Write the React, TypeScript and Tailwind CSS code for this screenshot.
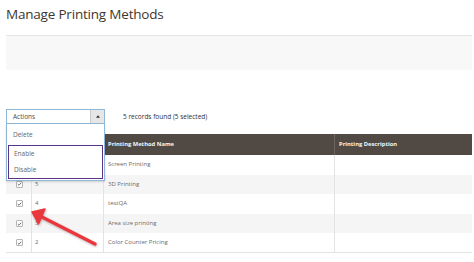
import React from 'react';

type Row = { id: string; name: string; checked: boolean };

const rows: Row[] = [
    { id: '6', name: 'Screen Printing', checked: true },
    { id: '5', name: '3D Printing', checked: true },
    { id: '4', name: 'testQA', checked: true },
    { id: '3', name: 'Area size printing', checked: true },
    { id: '2', name: 'Color Counter Pricing', checked: true },
];

const Check: React.FC = () => (
    <span className="flex items-center justify-center w-[7px] h-[7px] border border-[#b5b5b5] bg-white rounded-[1px]">
        <svg viewBox="0 0 8 8" className="w-[6px] h-[6px]">
            <path d="M1.2 4.2 L3.2 6 L6.8 1.8" fill="none" stroke="#444" strokeWidth="1.2" />
        </svg>
    </span>
);

const App: React.FC = () => {
    return (
        <div className="relative w-[474px] h-[262px] overflow-hidden bg-white px-[6px]" style={{ fontFamily: '"Open Sans", sans-serif' }}>
            <h1 className="pt-[4px] text-[13.5px] leading-[20px] text-[#41362f] tracking-[-0.2px]">Manage Printing Methods</h1>

            <div className="mt-[11px] h-[35px] bg-[#f8f8f8] border-t border-[#e5e5e5] mr-[-4px]"></div>

            <div className="relative mt-[39px] flex items-center h-[15px]">
                <div className="flex w-[99px] h-[15px] border border-[#8fb8d8] bg-white">
                    <span className="flex-1 pl-[6px] text-[6.5px] leading-[13px] text-[#514943]">Actions</span>
                    <span className="flex items-center justify-center w-[14px] bg-[#e6e6e6] border-l border-[#c9c9c9]">
                        <svg viewBox="0 0 6 4" className="w-[4px] h-[3px]">
                            <path d="M0 4 L3 0 L6 4 Z" fill="#333" />
                        </svg>
                    </span>
                </div>
                <span className="ml-[18px] text-[6.5px] text-[#303030]">5 records found (5 selected)</span>

                <div className="absolute left-0 top-[15px] z-10 w-[99px] bg-white border border-[#8fb8d8] border-t-0 shadow-[0_1px_2px_rgba(0,0,0,0.15)]">
                    <div className="h-[21px] pl-[6px] text-[6.5px] leading-[21px] text-[#666]">Delete</div>
                    <div className="mx-[1px] mb-[1px] border-[1.5px] border-[#5a3487]">
                        <div className="h-[16px] pl-[5px] text-[6.5px] leading-[16px] text-[#666]">Enable</div>
                        <div className="h-[16px] pl-[5px] text-[6.5px] leading-[16px] text-[#666]">Disable</div>
                    </div>
                </div>
            </div>

            <div className="mt-[10px] w-[466px]">
                <div className="flex h-[21px] bg-[#514943] text-[5.8px] font-bold text-[#f5f5f5] items-center">
                    <div className="w-[26px] h-full border-r border-[#6e6560]"></div>
                    <div className="w-[72px] h-full border-r border-[#6e6560]"></div>
                    <div className="w-[231px] h-full border-r border-[#6e6560] flex items-center pl-[4px]">Printing Method Name</div>
                    <div className="flex-1 h-full flex items-center pl-[4px]">Printing Description</div>
                </div>
                {rows.map((r, i) => (
                    <div key={r.id} className={`flex h-[19.6px] items-center text-[6px] text-[#6b6b6b] ${i % 2 === 1 ? 'bg-[#f5f5f5]' : 'bg-white'} ${i === rows.length - 1 ? 'border-b border-[#e3e3e3]' : ''}`}>
                        <div className="w-[26px] h-full flex items-center justify-center border-r border-[#e3e3e3] pl-[1px]">
                            {r.checked && <Check />}
                        </div>
                        <div className="w-[72px] h-full flex items-center pl-[3px] border-r border-[#e3e3e3]">{r.id}</div>
                        <div className="w-[231px] h-full flex items-center pl-[4px] border-r border-[#e3e3e3]">{r.name}</div>
                        <div className="flex-1 h-full"></div>
                    </div>
                ))}
            </div>

            <svg className="absolute left-0 top-0 pointer-events-none" width="474" height="262" viewBox="0 0 474 262">
                <defs>
                    <filter id="sh" x="-20%" y="-20%" width="140%" height="140%">
                        <feDropShadow dx="0.5" dy="1" stdDeviation="0.8" floodColor="#000" floodOpacity="0.3" />
                    </filter>
                </defs>
                <g filter="url(#sh)">
                    <line x1="95" y1="244" x2="40" y2="216" stroke="#e8383d" strokeWidth="3.5" strokeLinecap="round" />
                    <path d="M32 212 L45 209 L38.5 224 Z" fill="#e8383d" stroke="#e8383d" strokeWidth="1.5" strokeLinejoin="round" />
                </g>
            </svg>
        </div>
    );
};

export default App;
